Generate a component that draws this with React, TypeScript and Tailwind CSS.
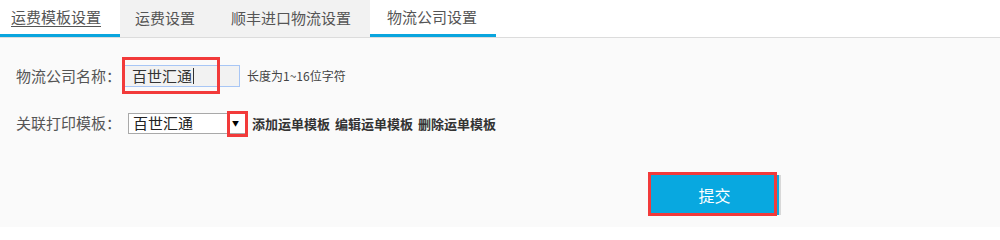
import React from 'react';

const tabs = [
  { label: '运费模板设置', width: 'w-[120px] pl-[11px]', active: true, underline: true },
  { label: '运费设置', width: 'w-[95px] pl-[15px]', active: false, underline: false },
  { label: '顺丰进口物流设置', width: 'w-[155px] pl-[16px]', active: false, underline: false },
  { label: '物流公司设置', width: 'w-[126px] pl-[17px]', active: true, underline: false },
];

const App = () => {
  return (
    <div className="w-[1000px] h-[227px] overflow-hidden bg-[#fafafa] text-[#555] font-['Noto_Sans_CJK_SC','Noto_Sans',sans-serif]">
      {/* tab bar */}
      <div className="flex h-[38px] bg-white border-b border-[#dcdcdc]">
        {tabs.map((t) => (
          <div
            key={t.label}
            className={`${t.width} h-[37px] flex items-center text-[15px] ${
              t.active ? 'bg-white border-b-[3px] border-[#0aa5de]' : 'bg-[#f2f2f2]'
            }`}
          >
            <span className={t.underline ? 'underline underline-offset-[3px]' : ''}>{t.label}</span>
          </div>
        ))}
      </div>

      <div className="pl-4 pt-[27px]">
        {/* row 1 */}
        <div className="flex items-center h-[22px]">
          <span className="w-[108px] text-[15px] text-[#555]">物流公司名称：</span>
          <div className="relative">
            <div className="w-[116px] h-[22px] bg-[#f2f2f2] border border-[#a8c6f5] flex items-center pl-[7px] text-[15px] text-[#333]">
              百世汇通<span className="w-px h-[16px] bg-[#333] ml-px" />
            </div>
            <div className="absolute left-[-2px] top-[-8px] w-[98px] h-[37px] border-[3px] border-[#f23a3a]" />
          </div>
          <span className="ml-[7px] text-[12px] text-[#444]">长度为1~16位字符</span>
        </div>

        {/* row 2 */}
        <div className="flex items-center h-[21px] mt-[26px]">
          <span className="w-[112px] text-[15px] text-[#555]">关联打印模板：</span>
          <div className="relative">
            <div className="w-[120px] h-[21px] bg-white border border-[#a9a9a9] flex items-center pl-[4px] text-[15px] text-[#222]">
              百世汇通
              <span className="ml-auto mr-[8px] text-[7px] leading-none text-black">▼</span>
            </div>
            <div className="absolute left-[99px] top-[-2px] w-[21px] h-[26px] border-[3px] border-[#f23a3a]" />
          </div>
          <div className="flex gap-[5px] ml-[4px] text-[13px] font-bold text-[#333]">
            <span>添加运单模板</span>
            <span>编辑运单模板</span>
            <span>删除运单模板</span>
          </div>
        </div>

        {/* submit */}
        <div className="mt-[41px] pl-[634px]">
          <div className="relative w-[131px] h-[40px]">
            <button className="w-[131px] h-[40px] bg-[#08a8e0] text-white text-[16px] border-r-2 border-[#d8d8d8]">
              提交
            </button>
            <div className="absolute left-[-2px] top-[-3px] w-[129px] h-[44px] border-[3px] border-[#f23a3a]" />
          </div>
        </div>
      </div>
    </div>
  );
};

export default App;
